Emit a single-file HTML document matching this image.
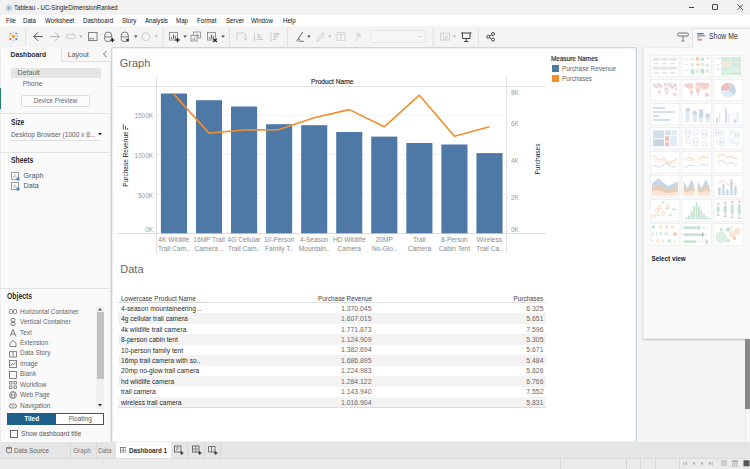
<!DOCTYPE html>
<html><head><meta charset="utf-8"><style>
*{margin:0;padding:0;box-sizing:border-box}
html,body{width:750px;height:469px;overflow:hidden;background:#efefef;font-family:"Liberation Sans", sans-serif;}
.a{position:absolute;white-space:nowrap}
.t{position:absolute;white-space:nowrap;line-height:1}
</style></head><body>

<div class="a" style="left:0;top:0;width:750px;height:14.5px;background:#f2f2f2"></div>
<div class="t" style="left:14.4px;top:4.2px;font-size:7.3px;color:#1a1a1a;transform:scaleX(0.83);transform-origin:0 0">Tableau - UC-SingleDimensionRanked</div>
<svg class="a" style="left:5px;top:4px" width="8" height="8" viewBox="0 0 8 8"><g stroke="#7aa6d6" stroke-width="0.8"><line x1="4" y1="0.5" x2="4" y2="7.5"/><line x1="0.5" y1="4" x2="7.5" y2="4"/><line x1="1.5" y1="1.5" x2="6.5" y2="6.5"/><line x1="6.5" y1="1.5" x2="1.5" y2="6.5"/></g></svg>
<div class="a" style="left:688.6px;top:6.5px;width:5.8px;height:1.1px;background:#444"></div>
<div class="a" style="left:712px;top:4.2px;width:6.2px;height:5.8px;border:1.1px solid #444;border-radius:1px"></div>
<svg class="a" style="left:736.5px;top:4px" width="6.5" height="6.5" viewBox="0 0 6.5 6.5"><path d="M0.3 0.3L6.2 6.2M6.2 0.3L0.3 6.2" stroke="#444" stroke-width="0.9"/></svg>
<div class="a" style="left:0;top:14.5px;width:750px;height:11.5px;background:#ffffff"></div>
<div class="t" style="left:5.5px;top:16.9px;font-size:7px;color:#111;transform:scaleX(0.88);transform-origin:0 0">File</div>
<div class="t" style="left:23.3px;top:16.9px;font-size:7px;color:#111;transform:scaleX(0.88);transform-origin:0 0">Data</div>
<div class="t" style="left:45px;top:16.9px;font-size:7px;color:#111;transform:scaleX(0.88);transform-origin:0 0">Worksheet</div>
<div class="t" style="left:82.7px;top:16.9px;font-size:7px;color:#111;transform:scaleX(0.88);transform-origin:0 0">Dashboard</div>
<div class="t" style="left:121.7px;top:16.9px;font-size:7px;color:#111;transform:scaleX(0.88);transform-origin:0 0">Story</div>
<div class="t" style="left:145px;top:16.9px;font-size:7px;color:#111;transform:scaleX(0.88);transform-origin:0 0">Analysis</div>
<div class="t" style="left:175.7px;top:16.9px;font-size:7px;color:#111;transform:scaleX(0.88);transform-origin:0 0">Map</div>
<div class="t" style="left:196.7px;top:16.9px;font-size:7px;color:#111;transform:scaleX(0.88);transform-origin:0 0">Format</div>
<div class="t" style="left:225.7px;top:16.9px;font-size:7px;color:#111;transform:scaleX(0.88);transform-origin:0 0">Server</div>
<div class="t" style="left:251.1px;top:16.9px;font-size:7px;color:#111;transform:scaleX(0.88);transform-origin:0 0">Window</div>
<div class="t" style="left:282.6px;top:16.9px;font-size:7px;color:#111;transform:scaleX(0.88);transform-origin:0 0">Help</div>
<div class="a" style="left:0;top:26px;width:750px;height:21px;background:#f4f4f4"></div>
<svg class="a" style="left:0;top:26px" width="750" height="21" viewBox="0 26 750 21">
<path d="M11.8 36.4H15.0M13.4 34.8V38.0" stroke="#f28e2b" stroke-width="1.44"/>
<path d="M9.600000000000001 33.8H11.600000000000001M10.600000000000001 32.8V34.8" stroke="#f28e2b" stroke-width="0.90"/>
<path d="M15.299999999999999 33.6H17.099999999999998M16.2 32.7V34.5" stroke="#4e79a7" stroke-width="0.81"/>
<path d="M9.3 39.1H11.5M10.4 38.0V40.2" stroke="#e15759" stroke-width="0.99"/>
<path d="M15.200000000000001 39.1H17.400000000000002M16.3 38.0V40.2" stroke="#4e79a7" stroke-width="0.99"/>
<path d="M12.8 32.4H14.0M13.4 31.799999999999997V33.0" stroke="#76b7d9" stroke-width="0.54"/>
<path d="M12.8 40.4H14.0M13.4 39.8V41.0" stroke="#76b7d9" stroke-width="0.54"/>
<path d="M8.8 36.4H10.0M9.4 35.8V37.0" stroke="#76b7d9" stroke-width="0.54"/>
<path d="M16.799999999999997 36.4H18.0M17.4 35.8V37.0" stroke="#4e79a7" stroke-width="0.54"/>
<line x1="25.6" y1="28" x2="25.6" y2="46" stroke="#dcdcdc" stroke-width="0.8"/>
<path d="M42.5 36.6H33.8M37.8 32.6L33.8 36.6L37.8 40.6" fill="none" stroke="#555" stroke-width="1.0" stroke-linecap="round" stroke-linejoin="round"/>
<path d="M50.5 36.6H59.2M55.2 32.6L59.2 36.6L55.2 40.6" fill="none" stroke="#aaa" stroke-width="0.9" stroke-linecap="round" stroke-linejoin="round"/>
<path d="M68 34.6H73.5A2 2 0 0 1 73.5 38.6H68A2 2 0 0 1 68 34.6Z M73 33V34.6" fill="none" stroke="#c3c3c3" stroke-width="0.8" stroke-linecap="round" stroke-linejoin="round"/>
<path d="M79.2 35.6H82.8L81 37.8Z" fill="#aaa"/>
<rect x="88.5" y="32.5" width="8.5" height="8" fill="none" stroke="#777" stroke-width="0.9"/>
<rect x="90" y="38.3" width="3.5" height="2.2" fill="none" stroke="#777" stroke-width="0.7"/>
<path d="M104.7 35.5A3.5 3.5 0 0 1 111.7 35.5V39.5A3.5 2 0 0 1 104.7 39.5Z M104.7 35.5A3.5 1.6 0 0 0 111.7 35.5" fill="none" stroke="#666" stroke-width="0.85"/><path d="M121.3 35.5A3.5 3.5 0 0 1 128.3 35.5V39.5A3.5 2 0 0 1 121.3 39.5Z M121.3 35.5A3.5 1.6 0 0 0 128.3 35.5" fill="none" stroke="#666" stroke-width="0.85"/>
<path d="M110.3 40.2H114.5M112.4 38.1V42.3" stroke="#222" stroke-width="1.2"/>
<rect x="126.3" y="38.8" width="2.6" height="2.6" fill="#444"/>
<path d="M133.9 35.6H137.5L135.7 37.8Z" fill="#444"/>
<circle cx="145.8" cy="36.6" r="4" fill="none" stroke="#c8c8c8" stroke-width="0.9"/>
<path d="M154.5 35.6H158.1L156.3 37.8Z" fill="#bbb"/>
<line x1="163.3" y1="28" x2="163.3" y2="46" stroke="#dcdcdc" stroke-width="0.8"/>
<rect x="169.5" y="32.4" width="8" height="7.6" fill="none" stroke="#8a8a8a" stroke-width="0.9"/>
<path d="M171.7 38.8V37M173.5 38.8V34.5M175.3 38.8V35.8" stroke="#555" stroke-width="0.9"/>
<path d="M175.3 40H179.7M177.5 37.8V42.2" stroke="#222" stroke-width="1.3"/>
<path d="M183.2 35.6H186.8L185 37.8Z" fill="#444"/>
<rect x="193.5" y="32" width="7" height="6" fill="#f4f4f4" stroke="#888" stroke-width="0.8"/><path d="M195.5 36.5V35M197 36.5V33.8M198.5 36.5V34.8" stroke="#666" stroke-width="0.7"/>
<rect x="191" y="35.5" width="6" height="5.5" fill="#f4f4f4" stroke="#888" stroke-width="0.8"/><path d="M193 39.8V38.5M194.5 39.8V37.5" stroke="#666" stroke-width="0.7"/>
<rect x="207.5" y="32.4" width="8" height="7.6" fill="none" stroke="#8a8a8a" stroke-width="0.9"/>
<path d="M209.7 38.8V37M211.5 38.8V34.5M213.3 38.8V35.8" stroke="#555" stroke-width="0.9"/>
<path d="M213.3 38.6L216.9 42M216.9 38.6L213.3 42" stroke="#222" stroke-width="1.3"/>
<path d="M221.2 35.6H224.8L223 37.8Z" fill="#444"/>
<line x1="229.5" y1="28" x2="229.5" y2="46" stroke="#dcdcdc" stroke-width="0.8"/>
<path d="M237 33H243.5Q245.5 33 245.5 35V39.5M243.5 38L245.5 40.5L247.5 38 M237 33V40" fill="none" stroke="#c8c8c8" stroke-width="0.8" stroke-linecap="round" stroke-linejoin="round"/>
<path d="M254.5 32.5V41M253 39.5L254.5 41L256 39.5" fill="none" stroke="#c8c8c8" stroke-width="0.8" stroke-linecap="round" stroke-linejoin="round"/>
<path d="M257.5 35H260M257.5 37.2H261.5M257.5 39.4H263" stroke="#c8c8c8" stroke-width="1.3"/>
<path d="M271 32.5V41M269.5 39.5L271 41L272.5 39.5" fill="none" stroke="#c8c8c8" stroke-width="0.8" stroke-linecap="round" stroke-linejoin="round"/>
<path d="M273.5 34H279.5M273.5 36.5H278M273.5 39H276" stroke="#c8c8c8" stroke-width="1.3"/>
<line x1="287.5" y1="28" x2="287.5" y2="46" stroke="#dcdcdc" stroke-width="0.8"/>
<path d="M297 40.8L302.5 32.5M299 41.2H303.5" fill="none" stroke="#777" stroke-width="1.1" stroke-linecap="round" stroke-linejoin="round"/>
<path d="M298.5 39L300 40" fill="none" stroke="#777" stroke-width="1.0" stroke-linecap="round" stroke-linejoin="round"/>
<path d="M307.1 35.6H310.7L308.9 37.8Z" fill="#444"/>
<path d="M316.5 40.5L322 33.8Q323.3 32.5 324 33.5Q324.6 34.5 323.5 35.5L318.5 41Q317.5 41.8 316.8 41" fill="none" stroke="#c8c8c8" stroke-width="0.9" stroke-linecap="round" stroke-linejoin="round"/>
<path d="M327.9 35.6H331.5L329.7 37.8Z" fill="#bbb"/>
<rect x="337" y="32.5" width="8" height="8" fill="none" stroke="#d0d0d0" stroke-width="0.8"/>
<path d="M339 34.5H343M341 34.5V39" fill="none" stroke="#c8c8c8" stroke-width="0.8" stroke-linecap="round" stroke-linejoin="round"/>
<path d="M355 41L357.5 38M356.5 34L360 37.5M357.5 33.5L361 36.5M357 36.5L359.5 33.5" fill="none" stroke="#c8c8c8" stroke-width="0.9" stroke-linecap="round" stroke-linejoin="round"/>
<rect x="370.8" y="30.4" width="54.5" height="12" rx="1.5" fill="#f6f6f6" stroke="#e0e0e0" stroke-width="0.8"/>
<path d="M419 36H422L420.5 37.6Z" fill="#ccc"/>
<line x1="433.2" y1="28" x2="433.2" y2="46" stroke="#dcdcdc" stroke-width="0.8"/>
<rect x="440.5" y="33" width="9" height="7" fill="none" stroke="#c8c8c8" stroke-width="0.8"/>
<path d="M443.5 33V40M445.5 39V36.5M447 39V35" stroke="#c8c8c8" stroke-width="0.8"/>
<path d="M452.7 35.6H456.3L454.5 37.8Z" fill="#bbb"/>
<path d="M461.5 33H471M462.5 33V38.5H470V33M466.3 38.5V41.5M464.5 41.5H468" fill="none" stroke="#444" stroke-width="1.0" stroke-linecap="round" stroke-linejoin="round"/>
<line x1="478.4" y1="28" x2="478.4" y2="46" stroke="#dcdcdc" stroke-width="0.8"/>
<g fill="none" stroke="#333" stroke-width="0.9"><circle cx="488.3" cy="36.8" r="1.5"/><circle cx="493" cy="34" r="1.5"/><circle cx="493" cy="39.6" r="1.5"/><path d="M489.6 36L491.7 34.8M489.6 37.6L491.7 38.8"/></g>
</svg>
<div class="a" style="left:691.5px;top:28.3px;width:58.5px;height:20px;background:#fafafa;border:1px solid #e4e4e4;border-bottom:none;border-right:none;z-index:2"></div>
<svg class="a" style="left:677px;top:32px;z-index:2" width="12" height="10" viewBox="0 0 12 10"><path d="M2 1H10A1.5 1.5 0 0 1 10 4H2A1.5 1.5 0 0 1 2 1Z M6 4V8.5M4.5 9H7.5" fill="none" stroke="#666" stroke-width="0.9"/></svg>
<svg class="a" style="left:697px;top:33px;z-index:2" width="9" height="9" viewBox="0 0 9 9"><rect x="0.2" y="0.2" width="6.5" height="1.2" fill="#555"/><rect x="0.2" y="2.2" width="8.3" height="1.2" fill="#6b8fbf"/><rect x="0.2" y="4.2" width="3.2" height="1.2" fill="#f5a05a"/><rect x="0.2" y="6.2" width="5" height="1.3" fill="#e8707a"/></svg>
<div class="t" style="left:708.5px;top:32.3px;font-size:8.3px;color:#333;z-index:2;transform:scaleX(0.83);transform-origin:0 0">Show Me</div>

<div class="a" style="left:0;top:47px;width:111px;height:395px;background:#fafafa;border-right:1px solid #e1e1e1"></div>
<div class="a" style="left:0;top:47px;width:1px;height:395px;background:#ececec"></div><div class="a" style="left:0;top:88px;width:1.3px;height:21px;background:#22806a"></div>
<div class="t" style="left:10.6px;top:51.8px;font-size:6.8px;font-weight:bold;color:#2b2b2b">Dashboard</div>
<div class="a" style="left:61px;top:47px;width:50px;height:14.5px;border-left:1px solid #e1e1e1;border-bottom:1px solid #e1e1e1;background:#f7f7f7"></div>
<div class="t" style="left:67.8px;top:50.8px;font-size:7px;color:#555">Layout</div>
<svg class="a" style="left:102px;top:50px" width="6" height="8" viewBox="0 0 6 8"><path d="M4.5 1L1.5 4L4.5 7" fill="none" stroke="#666" stroke-width="0.9"/></svg>
<div class="a" style="left:10.6px;top:68px;width:90.5px;height:10px;background:#e4e4e4"></div>
<div class="t" style="left:17.6px;top:69.3px;font-size:7px;color:#666">Default</div>
<div class="t" style="left:22.7px;top:80.6px;font-size:6.8px;color:#666">Phone</div>
<div class="a" style="left:21px;top:95px;width:69px;height:11.5px;border:1px solid #dadada;border-radius:1.5px;background:#fcfcfc"></div>
<div class="t" style="left:21px;top:97.6px;width:69px;text-align:center;font-size:6.3px;color:#666">Device Preview</div>
<div class="a" style="left:0;top:113px;width:111px;height:1px;background:#e3e3e3"></div>
<div class="t" style="left:10.9px;top:118.2px;font-size:8.3px;font-weight:bold;color:#2b2b2b;transform:scaleX(0.8);transform-origin:0 0">Size</div>
<div class="t" style="left:10.9px;top:132.4px;font-size:6.55px;color:#666">Desktop Browser (1000 x 8...</div>
<svg class="a" style="left:98px;top:133px" width="4" height="3" viewBox="0 0 4 3"><path d="M0 0H4L2 2.5Z" fill="#333"/></svg>
<div class="a" style="left:10.9px;top:140px;width:90px;height:1px;background:#dedede"></div>
<div class="a" style="left:0;top:152px;width:111px;height:1px;background:#e3e3e3"></div>
<div class="t" style="left:10.9px;top:156.4px;font-size:8.3px;font-weight:bold;color:#2b2b2b;transform:scaleX(0.824);transform-origin:0 0">Sheets</div>
<svg class="a" style="left:11px;top:172px" width="9" height="9" viewBox="0 0 9 9"><rect x="0.4" y="0.4" width="7" height="7" fill="#fff" stroke="#8a8a8a" stroke-width="0.8"/><path d="M2.5 5.5V3.8M3.8 5.5V2.3M5 5.5V3.3" stroke="#999" stroke-width="0.6"/><circle cx="7" cy="7" r="1.7" fill="#3c7fb8"/><path d="M6.2 7L6.8 7.6L7.8 6.4" fill="none" stroke="#cfe0f0" stroke-width="0.4"/></svg>
<div class="t" style="left:23.5px;top:172px;font-size:7.2px;color:#555">Graph</div>
<svg class="a" style="left:11px;top:182px" width="9" height="9" viewBox="0 0 9 9"><rect x="0.4" y="0.4" width="7" height="7" fill="#fff" stroke="#8a8a8a" stroke-width="0.8"/><path d="M2.5 5.5V3.8M3.8 5.5V2.3M5 5.5V3.3" stroke="#999" stroke-width="0.6"/><circle cx="7" cy="7" r="1.7" fill="#3c7fb8"/><path d="M6.2 7L6.8 7.6L7.8 6.4" fill="none" stroke="#cfe0f0" stroke-width="0.4"/></svg>
<div class="t" style="left:23.5px;top:182.2px;font-size:7.2px;color:#555">Data</div>
<div class="a" style="left:0;top:288px;width:111px;height:1px;background:#e3e3e3"></div>
<div class="t" style="left:7.4px;top:292.1px;font-size:8.3px;font-weight:bold;color:#2b2b2b;transform:scaleX(0.824);transform-origin:0 0">Objects</div>
<svg class="a" style="left:8.8px;top:307.9px" width="8" height="8" viewBox="0 0 8 8"><rect x="0.5" y="1.5" width="3" height="4" rx="1" fill="none" stroke="#666" stroke-width="0.8"/><rect x="4.5" y="1.5" width="3" height="4" rx="1" fill="none" stroke="#666" stroke-width="0.8"/></svg>
<div class="t" style="left:20px;top:308.6px;font-size:6.45px;color:#666">Horizontal Container</div>
<svg class="a" style="left:8.8px;top:318.3px" width="8" height="8" viewBox="0 0 8 8"><rect x="2" y="0.5" width="4" height="3" rx="1" fill="none" stroke="#666" stroke-width="0.8"/><rect x="2" y="4.5" width="4" height="3" rx="1" fill="none" stroke="#666" stroke-width="0.8"/></svg>
<div class="t" style="left:20px;top:319.0px;font-size:6.45px;color:#666">Vertical Container</div>
<svg class="a" style="left:8.8px;top:328.8px" width="8" height="8" viewBox="0 0 8 8"><path d="M1 7.5L4 0.5L7 7.5M2.2 5H5.8" fill="none" stroke="#555" stroke-width="0.8"/></svg>
<div class="t" style="left:20px;top:329.5px;font-size:6.45px;color:#666">Text</div>
<svg class="a" style="left:8.8px;top:339.2px" width="8" height="8" viewBox="0 0 8 8"><path d="M1 7.5V4L4 1.5L7 4V7.5Z" fill="none" stroke="#666" stroke-width="0.8"/></svg>
<div class="t" style="left:20px;top:339.9px;font-size:6.45px;color:#666">Extension</div>
<svg class="a" style="left:8.8px;top:349.6px" width="8" height="8" viewBox="0 0 8 8"><path d="M0.5 1.5H3.5L4 2.5L4.5 1.5H7.5V7H4.5L4 7.5L3.5 7H0.5Z M4 2.5V7" fill="none" stroke="#666" stroke-width="0.8"/></svg>
<div class="t" style="left:20px;top:350.3px;font-size:6.45px;color:#666">Data Story</div>
<svg class="a" style="left:8.8px;top:360.0px" width="8" height="8" viewBox="0 0 8 8"><rect x="0.5" y="0.5" width="7" height="7" fill="none" stroke="#666" stroke-width="0.8"/><path d="M1.5 6L3.5 3.5L5 5L6.5 2" fill="none" stroke="#666" stroke-width="0.7"/></svg>
<div class="t" style="left:20px;top:360.7px;font-size:6.45px;color:#666">Image</div>
<svg class="a" style="left:8.8px;top:370.5px" width="8" height="8" viewBox="0 0 8 8"><rect x="0.5" y="0.5" width="7" height="7" fill="none" stroke="#666" stroke-width="0.8"/></svg>
<div class="t" style="left:20px;top:371.2px;font-size:6.45px;color:#666">Blank</div>
<svg class="a" style="left:8.8px;top:380.9px" width="8" height="8" viewBox="0 0 8 8"><rect x="0.5" y="0.5" width="2.5" height="2.5" fill="none" stroke="#666" stroke-width="0.7"/><rect x="5" y="0.5" width="2.5" height="2.5" fill="none" stroke="#666" stroke-width="0.7"/><rect x="0.5" y="5" width="2.5" height="2.5" fill="none" stroke="#666" stroke-width="0.7"/><rect x="5" y="5" width="2.5" height="2.5" fill="none" stroke="#666" stroke-width="0.7"/></svg>
<div class="t" style="left:20px;top:381.6px;font-size:6.45px;color:#666">Workflow</div>
<svg class="a" style="left:8.8px;top:391.3px" width="8" height="8" viewBox="0 0 8 8"><circle cx="4" cy="4" r="3.4" fill="none" stroke="#666" stroke-width="0.8"/><ellipse cx="4" cy="4" rx="1.5" ry="3.4" fill="none" stroke="#666" stroke-width="0.6"/><path d="M0.6 4H7.4" stroke="#666" stroke-width="0.6"/></svg>
<div class="t" style="left:20px;top:392.0px;font-size:6.45px;color:#666">Web Page</div>
<svg class="a" style="left:8.8px;top:401.8px" width="8" height="8" viewBox="0 0 8 8"><rect x="0.5" y="2" width="7" height="4" rx="2" fill="none" stroke="#666" stroke-width="0.8"/><path d="M2.5 4H5.5" stroke="#666" stroke-width="0.7"/></svg>
<div class="t" style="left:20px;top:402.5px;font-size:6.45px;color:#666">Navigation</div>
<div class="a" style="left:96px;top:306px;width:8px;height:103px;background:#f0f0f0"></div>
<div class="a" style="left:96.5px;top:311.8px;width:7px;height:67px;background:#c1c1c1"></div>
<svg class="a" style="left:98px;top:307.5px" width="4" height="3" viewBox="0 0 4 3"><path d="M0 2.5H4L2 0Z" fill="#555"/></svg>
<svg class="a" style="left:98px;top:403.5px" width="4" height="3" viewBox="0 0 4 3"><path d="M0 0H4L2 2.5Z" fill="#333"/></svg>
<div class="a" style="left:7.4px;top:412.7px;width:97px;height:12.3px;border:1px solid #555;background:#fff"></div>
<div class="a" style="left:7.4px;top:412.7px;width:48.6px;height:12.3px;background:#1d5f8a"></div>
<div class="t" style="left:7.4px;top:415.6px;width:48.6px;text-align:center;font-size:6.5px;font-weight:bold;color:#fff">Tiled</div>
<div class="t" style="left:56px;top:415.6px;width:48.4px;text-align:center;font-size:6.5px;color:#555">Floating</div>
<div class="a" style="left:10px;top:429.6px;width:8px;height:8px;border:1px solid #666;background:#fff"></div>
<div class="t" style="left:21.1px;top:430.7px;font-size:6.45px;color:#555">Show dashboard title</div>

<div class="a" style="left:111px;top:47px;width:526px;height:396px;background:#fff;border:1px solid #cdd6e0;border-radius:2px;box-shadow:inset 0 0 0 1px #edf1f5"></div>
<svg class="a" style="left:0;top:0" width="750" height="469" viewBox="0 0 750 469"><line x1="153" y1="193.9" x2="506" y2="193.9" stroke="#f2f2f2" stroke-width="1"/>
<line x1="153" y1="154.4" x2="506" y2="154.4" stroke="#f2f2f2" stroke-width="1"/>
<line x1="153" y1="115.0" x2="506" y2="115.0" stroke="#f2f2f2" stroke-width="1"/>
<line x1="506" y1="196.7" x2="509" y2="196.7" stroke="#eeeeee" stroke-width="1"/>
<line x1="506" y1="160.2" x2="509" y2="160.2" stroke="#eeeeee" stroke-width="1"/>
<line x1="506" y1="123.6" x2="509" y2="123.6" stroke="#eeeeee" stroke-width="1"/>
<line x1="156.5" y1="76" x2="156.5" y2="254" stroke="#e3e3e3" stroke-width="1"/>
<line x1="506.5" y1="76" x2="506.5" y2="254" stroke="#e3e3e3" stroke-width="1"/>
<line x1="117.5" y1="86.5" x2="546" y2="86.5" stroke="#e3e3e3" stroke-width="1"/>
<line x1="117.5" y1="233.5" x2="546" y2="233.5" stroke="#dcdcdc" stroke-width="1"/>
<rect x="160.90" y="93.5" width="26.1" height="139.8" fill="#4e79a7"/>
<rect x="195.96" y="100.2" width="26.1" height="133.1" fill="#4e79a7"/>
<rect x="231.02" y="106.5" width="26.1" height="126.8" fill="#4e79a7"/>
<rect x="266.08" y="124.2" width="26.1" height="109.1" fill="#4e79a7"/>
<rect x="301.14" y="125.2" width="26.1" height="108.1" fill="#4e79a7"/>
<rect x="336.20" y="132.0" width="26.1" height="101.3" fill="#4e79a7"/>
<rect x="371.26" y="136.6" width="26.1" height="96.7" fill="#4e79a7"/>
<rect x="406.32" y="143.0" width="26.1" height="90.3" fill="#4e79a7"/>
<rect x="441.38" y="144.5" width="26.1" height="88.8" fill="#4e79a7"/>
<rect x="476.44" y="153.1" width="26.1" height="80.2" fill="#4e79a7"/>
<polyline points="173.95,94.4 209.01,133.1 244.07,130.0 279.13,129.6 314.19,117.7 349.25,109.6 384.31,126.8 419.37,95.2 454.43,136.3 489.49,126.7" fill="none" stroke="#f28e2b" stroke-width="1.6" stroke-linejoin="round"/></svg>
<div class="t" style="left:119.7px;top:58.2px;font-size:11px;color:#666;">Graph</div>
<div class="t" style="left:120.3px;top:263.8px;font-size:11px;color:#666;">Data</div>
<div class="t" style="left:310.8px;top:77.7px;font-size:7px;color:#333;-webkit-text-stroke:0.2px #333;transform:scaleX(0.95);transform-origin:0 0">Product Name</div>
<div class="t" style="left:113px;top:113.1px;width:40px;text-align:right;font-size:6.4px;color:#9a9a9a">1500K</div>
<div class="t" style="left:113px;top:153.0px;width:40px;text-align:right;font-size:6.4px;color:#9a9a9a">1000K</div>
<div class="t" style="left:113px;top:192.6px;width:40px;text-align:right;font-size:6.4px;color:#9a9a9a">500K</div>
<div class="t" style="left:113px;top:226.6px;width:40px;text-align:right;font-size:6.4px;color:#9a9a9a">0K</div>
<div class="t" style="left:511px;top:89.6px;font-size:6.4px;color:#9a9a9a;">8K</div>
<div class="t" style="left:511px;top:121.2px;font-size:6.4px;color:#9a9a9a;">6K</div>
<div class="t" style="left:511px;top:157.9px;font-size:6.4px;color:#9a9a9a;">4K</div>
<div class="t" style="left:511px;top:194.6px;font-size:6.4px;color:#9a9a9a;">2K</div>
<div class="t" style="left:511px;top:226.6px;font-size:6.4px;color:#9a9a9a;">0K</div>
<div class="t" style="left:125.8px;top:158.8px;font-size:6.5px;color:#222;transform:translate(-50%,-50%) rotate(-90deg);transform-origin:center">Purchase Revenue</div>
<svg class="a" style="left:0;top:0" width="140" height="140" viewBox="0 0 140 140"><path d="M123.3 124.2V129.7M125.5 126.3V129.7M127.6 128V129.7" stroke="#555" stroke-width="1"/></svg>
<div class="t" style="left:538px;top:158.8px;font-size:6.6px;color:#222;transform:translate(-50%,-50%) rotate(-90deg);transform-origin:center">Purchases</div>
<div class="t" style="left:156.45000000000002px;top:237.1px;width:35px;text-align:center;font-size:6.6px;color:#8a8a8a">4K Wildlife</div>
<div class="t" style="left:156.45000000000002px;top:246.1px;width:35px;text-align:center;font-size:6.6px;color:#8a8a8a">Trail Cam..</div>
<div class="t" style="left:191.51000000000002px;top:237.1px;width:35px;text-align:center;font-size:6.6px;color:#8a8a8a">16MP Trail</div>
<div class="t" style="left:191.51000000000002px;top:246.1px;width:35px;text-align:center;font-size:6.6px;color:#8a8a8a">Camera ..</div>
<div class="t" style="left:226.57000000000002px;top:237.1px;width:35px;text-align:center;font-size:6.6px;color:#8a8a8a">4G Cellular</div>
<div class="t" style="left:226.57000000000002px;top:246.1px;width:35px;text-align:center;font-size:6.6px;color:#8a8a8a">Trail Cam..</div>
<div class="t" style="left:261.63px;top:237.1px;width:35px;text-align:center;font-size:6.6px;color:#8a8a8a">10-Person</div>
<div class="t" style="left:261.63px;top:246.1px;width:35px;text-align:center;font-size:6.6px;color:#8a8a8a">Family T..</div>
<div class="t" style="left:296.69000000000005px;top:237.1px;width:35px;text-align:center;font-size:6.6px;color:#8a8a8a">4-Season</div>
<div class="t" style="left:296.69000000000005px;top:246.1px;width:35px;text-align:center;font-size:6.6px;color:#8a8a8a">Mountain..</div>
<div class="t" style="left:331.75px;top:237.1px;width:35px;text-align:center;font-size:6.6px;color:#8a8a8a">HD Wildlife</div>
<div class="t" style="left:331.75px;top:246.1px;width:35px;text-align:center;font-size:6.6px;color:#8a8a8a">Camera</div>
<div class="t" style="left:366.81000000000006px;top:237.1px;width:35px;text-align:center;font-size:6.6px;color:#8a8a8a">20MP</div>
<div class="t" style="left:366.81000000000006px;top:246.1px;width:35px;text-align:center;font-size:6.6px;color:#8a8a8a">No-Glo..</div>
<div class="t" style="left:401.87px;top:237.1px;width:35px;text-align:center;font-size:6.6px;color:#8a8a8a">Trail</div>
<div class="t" style="left:401.87px;top:246.1px;width:35px;text-align:center;font-size:6.6px;color:#8a8a8a">Camera</div>
<div class="t" style="left:436.93000000000006px;top:237.1px;width:35px;text-align:center;font-size:6.6px;color:#8a8a8a">8-Person</div>
<div class="t" style="left:436.93000000000006px;top:246.1px;width:35px;text-align:center;font-size:6.6px;color:#8a8a8a">Cabin Tent</div>
<div class="t" style="left:471.99px;top:237.1px;width:35px;text-align:center;font-size:6.6px;color:#8a8a8a">Wireless</div>
<div class="t" style="left:471.99px;top:246.1px;width:35px;text-align:center;font-size:6.6px;color:#8a8a8a">Trail Ca..</div>
<div class="t" style="left:550.8px;top:54.7px;font-size:7px;color:#333;-webkit-text-stroke:0.2px #333;transform:scaleX(0.913);transform-origin:0 0">Measure Names</div>
<div class="a" style="left:552px;top:64.7px;width:7.3px;height:7px;background:#4e79a7"></div>
<div class="a" style="left:552px;top:75.3px;width:7.3px;height:7px;background:#f28e2b"></div>
<div class="t" style="left:562px;top:65.7px;font-size:6.8px;color:#666;transform:scaleX(0.935);transform-origin:0 0">Purchase Revenue</div>
<div class="t" style="left:562px;top:76.0px;font-size:6.8px;color:#666;transform:scaleX(0.935);transform-origin:0 0">Purchases</div>
<div class="a" style="left:118px;top:302px;width:428px;height:1px;background:#e0e0e0"></div>
<div class="a" style="left:118px;top:302px;width:84px;height:1px;background:#d4d4d4"></div>
<div class="t" style="left:120.8px;top:295.9px;font-size:6.8px;color:#3a3a3a;transform:scaleX(0.958);transform-origin:0 0">Lowercase Product Name</div>
<div class="t" style="left:300px;top:296px;width:72px;text-align:right;font-size:6.35px;color:#444">Purchase Revenue</div>
<div class="t" style="left:480px;top:296px;width:63.5px;text-align:right;font-size:6.35px;color:#444">Purchases</div>
<div class="t" style="left:120.8px;top:305.7px;font-size:7.15px;color:#2a2a2a;transform:scaleX(0.93);transform-origin:0 0">4-season mountaineering ..</div>
<div class="t" style="left:300px;top:305.63px;width:71.5px;text-align:right;font-size:6.87px;color:#6a6a6a">1.370.045</div>
<div class="t" style="left:480px;top:305.63px;width:63.5px;text-align:right;font-size:6.87px;color:#6a6a6a">6.325</div>
<div class="a" style="left:118px;top:313.4px;width:428px;height:10.45px;background:#f3f3f3"></div>
<div class="t" style="left:120.8px;top:316.1px;font-size:7.15px;color:#2a2a2a;transform:scaleX(0.93);transform-origin:0 0">4g cellular trail camera</div>
<div class="t" style="left:300px;top:316.08px;width:71.5px;text-align:right;font-size:6.87px;color:#6a6a6a">1.607.015</div>
<div class="t" style="left:480px;top:316.08px;width:63.5px;text-align:right;font-size:6.87px;color:#6a6a6a">5.651</div>
<div class="t" style="left:120.8px;top:326.6px;font-size:7.15px;color:#2a2a2a;transform:scaleX(0.93);transform-origin:0 0">4k wildlife trail camera</div>
<div class="t" style="left:300px;top:326.53px;width:71.5px;text-align:right;font-size:6.87px;color:#6a6a6a">1.771.873</div>
<div class="t" style="left:480px;top:326.53px;width:63.5px;text-align:right;font-size:6.87px;color:#6a6a6a">7.596</div>
<div class="a" style="left:118px;top:334.4px;width:428px;height:10.45px;background:#f3f3f3"></div>
<div class="t" style="left:120.8px;top:337.0px;font-size:7.15px;color:#2a2a2a;transform:scaleX(0.93);transform-origin:0 0">8-person cabin tent</div>
<div class="t" style="left:300px;top:336.98px;width:71.5px;text-align:right;font-size:6.87px;color:#6a6a6a">1.124.909</div>
<div class="t" style="left:480px;top:336.98px;width:63.5px;text-align:right;font-size:6.87px;color:#6a6a6a">5.305</div>
<div class="t" style="left:120.8px;top:347.5px;font-size:7.15px;color:#2a2a2a;transform:scaleX(0.93);transform-origin:0 0">10-person family tent</div>
<div class="t" style="left:300px;top:347.43px;width:71.5px;text-align:right;font-size:6.87px;color:#6a6a6a">1.382.694</div>
<div class="t" style="left:480px;top:347.43px;width:63.5px;text-align:right;font-size:6.87px;color:#6a6a6a">5.671</div>
<div class="a" style="left:118px;top:355.2px;width:428px;height:10.45px;background:#f3f3f3"></div>
<div class="t" style="left:120.8px;top:357.9px;font-size:7.15px;color:#2a2a2a;transform:scaleX(0.93);transform-origin:0 0">16mp trail camera with so..</div>
<div class="t" style="left:300px;top:357.88px;width:71.5px;text-align:right;font-size:6.87px;color:#6a6a6a">1.686.895</div>
<div class="t" style="left:480px;top:357.88px;width:63.5px;text-align:right;font-size:6.87px;color:#6a6a6a">5.484</div>
<div class="t" style="left:120.8px;top:368.4px;font-size:7.15px;color:#2a2a2a;transform:scaleX(0.93);transform-origin:0 0">20mp no-glow trail camera</div>
<div class="t" style="left:300px;top:368.33px;width:71.5px;text-align:right;font-size:6.87px;color:#6a6a6a">1.224.983</div>
<div class="t" style="left:480px;top:368.33px;width:63.5px;text-align:right;font-size:6.87px;color:#6a6a6a">5.826</div>
<div class="a" style="left:118px;top:376.1px;width:428px;height:10.45px;background:#f3f3f3"></div>
<div class="t" style="left:120.8px;top:378.8px;font-size:7.15px;color:#2a2a2a;transform:scaleX(0.93);transform-origin:0 0">hd wildlife camera</div>
<div class="t" style="left:300px;top:378.78px;width:71.5px;text-align:right;font-size:6.87px;color:#6a6a6a">1.284.122</div>
<div class="t" style="left:480px;top:378.78px;width:63.5px;text-align:right;font-size:6.87px;color:#6a6a6a">6.766</div>
<div class="t" style="left:120.8px;top:389.3px;font-size:7.15px;color:#2a2a2a;transform:scaleX(0.93);transform-origin:0 0">trail camera</div>
<div class="t" style="left:300px;top:389.23px;width:71.5px;text-align:right;font-size:6.87px;color:#6a6a6a">1.143.940</div>
<div class="t" style="left:480px;top:389.23px;width:63.5px;text-align:right;font-size:6.87px;color:#6a6a6a">7.552</div>
<div class="a" style="left:118px;top:397.1px;width:428px;height:10.45px;background:#f3f3f3"></div>
<div class="t" style="left:120.8px;top:399.7px;font-size:7.15px;color:#2a2a2a;transform:scaleX(0.93);transform-origin:0 0">wireless trail camera</div>
<div class="t" style="left:300px;top:399.68px;width:71.5px;text-align:right;font-size:6.87px;color:#6a6a6a">1.016.904</div>
<div class="t" style="left:480px;top:399.68px;width:63.5px;text-align:right;font-size:6.87px;color:#6a6a6a">5.831</div>
<div class="a" style="left:118px;top:407px;width:428px;height:1px;background:#dcdcdc"></div>

<div class="a" style="left:637px;top:47px;width:113px;height:422px;background:#f4f4f4"></div><div class="a" style="left:744.5px;top:339px;width:5.5px;height:103px;background:#f7f7f7;border-left:1px solid #e6e6e6"></div>
<div class="a" style="left:643px;top:47px;width:107px;height:292px;background:#fafafa;border:1px solid #ebebeb;border-right:none;box-shadow:0 1px 1.5px rgba(0,0,0,0.22)"></div>
<div class="a" style="left:745px;top:339px;width:5px;height:70.4px;background:#888"></div>
<div class="t" style="left:651.6px;top:255.8px;font-size:6.3px;font-weight:bold;color:#222">Select view</div>
<svg class="a" style="left:0;top:0" width="750" height="469" viewBox="0 0 750 469">
<g transform="translate(650.10,55.10)"><rect x="0.25" y="0.25" width="29.5" height="21.5" fill="#fff" stroke="#e4e4e4" stroke-width="0.5"/><rect x="2" y="2" width="26" height="4" fill="#f0f0f0"/><rect x="2" y="11" width="26" height="4" fill="#f0f0f0"/><rect x="4" y="3.5" width="5" height="1.3" fill="#dedede"/><rect x="4" y="8" width="5" height="1.3" fill="#dedede"/><rect x="4" y="12.5" width="5" height="1.3" fill="#dedede"/><rect x="4" y="17" width="5" height="1.3" fill="#dedede"/><rect x="12" y="3.5" width="5" height="1.3" fill="#dedede"/><rect x="12" y="8" width="5" height="1.3" fill="#dedede"/><rect x="12" y="12.5" width="5" height="1.3" fill="#dedede"/><rect x="12" y="17" width="5" height="1.3" fill="#dedede"/><rect x="20" y="3.5" width="5" height="1.3" fill="#dedede"/><rect x="20" y="8" width="5" height="1.3" fill="#dedede"/><rect x="20" y="12.5" width="5" height="1.3" fill="#dedede"/><rect x="20" y="17" width="5" height="1.3" fill="#dedede"/></g>
<g transform="translate(681.65,55.10)"><rect x="0.25" y="0.25" width="29.5" height="21.5" fill="#fff" stroke="#e4e4e4" stroke-width="0.5"/><rect x="9" y="2.5" width="3.5" height="3" fill="#ddefe3"/><rect x="14" y="2" width="3.5" height="3.5" fill="#f9c9a3"/><rect x="19" y="2.5" width="3.5" height="3" fill="#c3e2cf"/><rect x="24" y="2" width="3.5" height="2" fill="#ddefe3"/><rect x="9" y="8" width="3.5" height="3" fill="#ddefe3"/><rect x="14.5" y="8.5" width="3.5" height="1.8" fill="#f9c9a3"/><rect x="19" y="8" width="3.5" height="3" fill="#ddefe3"/><rect x="24" y="8.5" width="3.5" height="3" fill="#ddefe3"/><rect x="9" y="14" width="3.5" height="5" fill="#c3e2cf"/><rect x="14" y="14" width="3.5" height="4" fill="#ddefe3"/><rect x="19" y="13.5" width="3.5" height="5" fill="#c3e2cf"/><rect x="24" y="14" width="3.5" height="4" fill="#ddefe3"/><rect x="3" y="3.5" width="3" height="1" fill="#dedede"/><rect x="3" y="9" width="3" height="1" fill="#dedede"/><rect x="3" y="15" width="3" height="1" fill="#dedede"/></g>
<g transform="translate(713.20,55.10)"><rect x="0.25" y="0.25" width="29.5" height="21.5" fill="#fff" stroke="#e4e4e4" stroke-width="0.5"/><rect x="8" y="2" width="20" height="18" fill="#c3e2cf" opacity="0.75"/><path d="M8 7H28M8 12H28M8 16H28M17 2V20" stroke="#fff" stroke-width="0.5"/><rect x="8.5" y="7" width="8" height="4" fill="#fce6d3"/><rect x="17" y="12" width="10" height="3" fill="#ddefe3"/><rect x="9" y="15" width="7" height="3" fill="#ddefe3"/><rect x="3" y="3" width="3" height="1" fill="#dedede"/><rect x="3" y="9" width="3" height="1" fill="#dedede"/><rect x="3" y="14" width="3" height="1" fill="#dedede"/></g>
<g transform="translate(650.10,79.15)"><rect x="0.25" y="0.25" width="29.5" height="21.5" fill="#fff" stroke="#e4e4e4" stroke-width="0.5"/><path d="M2 5L9 3.5L12.5 5.5L11 8.5L8 10L5.5 8.5L3 7Z M8.5 10.5L11.5 11.5L10 17.5L8.5 14Z M14 3.5L17.5 3.5L17.5 7L14 7Z M13.5 7.5L18 7.5L19 10.5L16.5 17L14.5 12Z M17.5 3L27.5 4L27 9L23 10.5L19.5 9L17.5 7Z M23 14L27 13.5L27.5 17L23.5 17.5Z" fill="#ececec"/><circle cx="4" cy="6" r="0.9" fill="#f5b8b5"/><circle cx="6" cy="8" r="0.9" fill="#f5b8b5"/><circle cx="9" cy="5" r="0.9" fill="#f5b8b5"/><circle cx="11" cy="7" r="0.9" fill="#f5b8b5"/><circle cx="15" cy="5" r="0.9" fill="#f5b8b5"/><circle cx="16" cy="10" r="0.9" fill="#f5b8b5"/><circle cx="17" cy="14" r="0.9" fill="#f5b8b5"/><circle cx="20" cy="6" r="0.9" fill="#f5b8b5"/><circle cx="22" cy="8" r="0.9" fill="#f5b8b5"/><circle cx="25" cy="6" r="0.9" fill="#f5b8b5"/><circle cx="24" cy="15" r="0.9" fill="#f5b8b5"/><circle cx="9" cy="13" r="0.9" fill="#f5b8b5"/><circle cx="26" cy="10" r="0.9" fill="#f5b8b5"/></g>
<g transform="translate(681.65,79.15)"><rect x="0.25" y="0.25" width="29.5" height="21.5" fill="#fff" stroke="#e4e4e4" stroke-width="0.5"/><path d="M2 5L9 3.5L12.5 5.5L11 8.5L8 10L5.5 8.5L3 7Z M8.5 10.5L11.5 11.5L10 17.5L8.5 14Z M14 3.5L17.5 3.5L17.5 7L14 7Z M13.5 7.5L18 7.5L19 10.5L16.5 17L14.5 12Z M17.5 3L27.5 4L27 9L23 10.5L19.5 9L17.5 7Z M23 14L27 13.5L27.5 17L23.5 17.5Z" fill="#f4c4c0" opacity="0.8"/></g>
<g transform="translate(713.20,79.15)"><rect x="0.25" y="0.25" width="29.5" height="21.5" fill="#fff" stroke="#e4e4e4" stroke-width="0.5"/><circle cx="15" cy="11" r="7.5" fill="#e1ebf5"/><path d="M15 11L15 3.5A7.5 7.5 0 0 1 20.5 6Z" fill="#f2bdbd" opacity="0.7"/><path d="M15 11L20.5 6A7.5 7.5 0 0 1 21 16Z" fill="#c9d6e4"/><path d="M15 11L7.5 11A7.5 7.5 0 0 1 15 3.5Z" fill="#f2bdbd"/></g>
<g transform="translate(650.10,103.20)"><rect x="0.25" y="0.25" width="29.5" height="21.5" fill="#fff" stroke="#e4e4e4" stroke-width="0.5"/><rect x="3" y="4" width="12" height="1.6" fill="#c9d6e4"/><rect x="3" y="8" width="22" height="1.6" fill="#c9d6e4"/><rect x="3" y="12" width="6" height="1.6" fill="#c9d6e4"/><rect x="3" y="16" width="17" height="1.6" fill="#c9d6e4"/></g>
<g transform="translate(681.65,103.20)"><rect x="0.25" y="0.25" width="29.5" height="21.5" fill="#fff" stroke="#e4e4e4" stroke-width="0.5"/><rect x="4" y="5" width="4" height="14" fill="#e1ebf5"/><rect x="4" y="5" width="4" height="3" fill="#c9d6e4"/><rect x="11" y="8" width="4" height="11" fill="#e1ebf5"/><rect x="11" y="8" width="4" height="4" fill="#c9d6e4"/><rect x="17.5" y="6" width="4" height="13" fill="#e1ebf5"/><rect x="17.5" y="6" width="4" height="8" fill="#c9d6e4"/><rect x="24" y="10.5" width="4" height="8.5" fill="#e1ebf5"/><rect x="24" y="10.5" width="4" height="4" fill="#c9d6e4"/></g>
<g transform="translate(713.20,103.20)"><rect x="0.25" y="0.25" width="29.5" height="21.5" fill="#fff" stroke="#e4e4e4" stroke-width="0.5"/><rect x="3" y="14" width="1.6" height="6" fill="#c9d6e4"/><rect x="5.5" y="9" width="1.6" height="11" fill="#e1ebf5"/><rect x="12" y="5" width="1.6" height="15" fill="#c9d6e4"/><rect x="14.5" y="11" width="1.6" height="9" fill="#e1ebf5"/><rect x="21" y="16" width="1.6" height="4" fill="#c9d6e4"/><rect x="23.5" y="9" width="1.6" height="11" fill="#e1ebf5"/><path d="M10 1V21M20 1V21" stroke="#eee" stroke-width="0.4"/></g>
<g transform="translate(650.10,127.25)"><rect x="0.25" y="0.25" width="29.5" height="21.5" fill="#fff" stroke="#e4e4e4" stroke-width="0.5"/><rect x="3" y="3" width="11" height="8" fill="#c9d6e4" opacity="0.8"/><rect x="3" y="12" width="11" height="7" fill="#c9d6e4"/><rect x="15" y="3" width="6" height="5" fill="#c9d6e4" opacity="0.7"/><rect x="22" y="3" width="5" height="5" fill="#e1ebf5"/><rect x="15" y="9" width="4" height="5" fill="#f2bdbd"/><rect x="15" y="15" width="4" height="4" fill="#f2bdbd"/><rect x="20" y="9" width="7" height="10" fill="#e1ebf5"/></g>
<g transform="translate(681.65,127.25)"><rect x="0.25" y="0.25" width="29.5" height="21.5" fill="#fff" stroke="#e4e4e4" stroke-width="0.5"/><circle cx="6" cy="4" r="2.6" fill="none" stroke="#c9d6e4" stroke-width="0.6"/><circle cx="6" cy="7" r="2.6" fill="none" stroke="#c9d6e4" stroke-width="0.6"/><circle cx="14" cy="5" r="2.6" fill="none" stroke="#c9d6e4" stroke-width="0.6"/><circle cx="23" cy="5" r="2.6" fill="none" stroke="#c9d6e4" stroke-width="0.6"/><circle cx="23" cy="8" r="2.6" fill="none" stroke="#c9d6e4" stroke-width="0.6"/><circle cx="6" cy="14" r="2.6" fill="none" stroke="#c9d6e4" stroke-width="0.6"/><circle cx="14" cy="13" r="2.6" fill="none" stroke="#c9d6e4" stroke-width="0.6"/><circle cx="14" cy="16" r="2.6" fill="none" stroke="#c9d6e4" stroke-width="0.6"/><circle cx="23" cy="17" r="2.6" fill="none" stroke="#c9d6e4" stroke-width="0.6"/></g>
<g transform="translate(713.20,127.25)"><rect x="0.25" y="0.25" width="29.5" height="21.5" fill="#fff" stroke="#e4e4e4" stroke-width="0.5"/><circle cx="4" cy="4" r="2" fill="none" stroke="#c9d6e4" stroke-width="0.6"/><circle cx="4" cy="7" r="2" fill="none" stroke="#c9d6e4" stroke-width="0.6"/><circle cx="9" cy="6" r="2" fill="none" stroke="#c9d6e4" stroke-width="0.6"/><circle cx="9" cy="13" r="2" fill="none" stroke="#c9d6e4" stroke-width="0.6"/><circle cx="5" cy="15" r="2" fill="none" stroke="#c9d6e4" stroke-width="0.6"/><circle cx="9" cy="17" r="2" fill="none" stroke="#c9d6e4" stroke-width="0.6"/><circle cx="19" cy="5" r="2" fill="none" stroke="#c9d6e4" stroke-width="0.6"/><circle cx="24" cy="7" r="2" fill="none" stroke="#c9d6e4" stroke-width="0.6"/><circle cx="24" cy="9" r="2" fill="none" stroke="#c9d6e4" stroke-width="0.6"/><circle cx="19" cy="14" r="2" fill="none" stroke="#c9d6e4" stroke-width="0.6"/><circle cx="24" cy="16" r="2" fill="none" stroke="#c9d6e4" stroke-width="0.6"/><path d="M15 1V21" stroke="#eee" stroke-width="0.4"/></g>
<g transform="translate(650.10,151.30)"><rect x="0.25" y="0.25" width="29.5" height="21.5" fill="#fff" stroke="#e4e4e4" stroke-width="0.5"/><path d="M3 4L9 9L14 7L18 12L27 8" fill="none" stroke="#f9c9a3" stroke-width="0.9"/><path d="M3 8L9 11L14 9L18 13L27 11" fill="none" stroke="#fce6d3" stroke-width="0.9"/><path d="M3 14L9 16L16 12L22 16L27 15" fill="none" stroke="#c9d6e4" stroke-width="0.9"/></g>
<g transform="translate(681.65,151.30)"><rect x="0.25" y="0.25" width="29.5" height="21.5" fill="#fff" stroke="#e4e4e4" stroke-width="0.5"/><path d="M3 8L8 6L13 9M17 8L21 5L27 7" fill="none" stroke="#f9c9a3" stroke-width="0.9"/><path d="M3 10L8 9L13 11M17 11L21 9L27 10" fill="none" stroke="#fce6d3" stroke-width="0.9"/><path d="M3 16L8 14L13 14M17 15L21 13L27 14" fill="none" stroke="#c9d6e4" stroke-width="0.9"/><path d="M15 1V21" stroke="#eee" stroke-width="0.4"/></g>
<g transform="translate(713.20,151.30)"><rect x="0.25" y="0.25" width="29.5" height="21.5" fill="#fff" stroke="#e4e4e4" stroke-width="0.5"/><path d="M4 6L9 3L14 6L18 5L24 8" fill="none" stroke="#f9c9a3" stroke-width="0.9"/><path d="M4 11L9 9L14 13L18 11L24 14" fill="none" stroke="#c9d6e4" stroke-width="0.9"/></g>
<g transform="translate(650.10,175.35)"><rect x="0.25" y="0.25" width="29.5" height="21.5" fill="#fff" stroke="#e4e4e4" stroke-width="0.5"/><path d="M2 8L8 3L18 11L28 6V20H2Z" fill="#c9d6e4"/><path d="M2 12L8 10L18 15L28 11V20H2Z" fill="#f9c9a3" opacity="0.7"/><path d="M2 16L8 15L18 18L28 16V20H2Z" fill="#fce6d3"/></g>
<g transform="translate(681.65,175.35)"><rect x="0.25" y="0.25" width="29.5" height="21.5" fill="#fff" stroke="#e4e4e4" stroke-width="0.5"/><path d="M2 6L6 13L10 4L13 12V20H2Z M16 6L20 13L24 4L28 12V20H16Z" fill="#c9d6e4"/><path d="M2 12L6 15L10 10L13 15V20H2Z M16 12L20 15L24 10L28 15V20H16Z" fill="#f9c9a3" opacity="0.7"/><path d="M2 16L6 17L10 15L13 17V20H2Z M16 16L20 17L24 15L28 17V20H16Z" fill="#fce6d3"/></g>
<g transform="translate(713.20,175.35)"><rect x="0.25" y="0.25" width="29.5" height="21.5" fill="#fff" stroke="#e4e4e4" stroke-width="0.5"/><rect x="5" y="12" width="2.4" height="8" fill="#c9d6e4"/><rect x="9" y="9" width="2.4" height="11" fill="#c9d6e4"/><rect x="13" y="14" width="2.4" height="6" fill="#c9d6e4"/><rect x="17" y="4" width="2.4" height="16" fill="#c9d6e4"/><rect x="21" y="11" width="2.4" height="9" fill="#c9d6e4"/><path d="M5 9L10 5L15 10L19 7L23 10" fill="none" stroke="#f9c9a3" stroke-width="0.8"/></g>
<g transform="translate(650.10,199.40)"><rect x="0.25" y="0.25" width="29.5" height="21.5" fill="#fff" stroke="#e4e4e4" stroke-width="0.5"/><circle cx="4" cy="17" r="1.8" fill="none" stroke="#f9c9a3" stroke-width="0.7"/><circle cx="7" cy="11" r="1.8" fill="none" stroke="#f9c9a3" stroke-width="0.7"/><circle cx="10" cy="8" r="1.8" fill="none" stroke="#f9c9a3" stroke-width="0.7"/><circle cx="13" cy="14" r="1.8" fill="none" stroke="#f9c9a3" stroke-width="0.7"/><circle cx="18" cy="7" r="1.8" fill="none" stroke="#f9c9a3" stroke-width="0.7"/><path d="M11 3H15M13 1V5" stroke="#c3e2cf" stroke-width="0.7"/><path d="M15 9H19M17 7V11" stroke="#c3e2cf" stroke-width="0.7"/><path d="M18 16H22M20 14V18" stroke="#c3e2cf" stroke-width="0.7"/><path d="M22 10H26M24 8V12" stroke="#c3e2cf" stroke-width="0.7"/><path d="M6 16H10M8 14V18" stroke="#c3e2cf" stroke-width="0.7"/></g>
<g transform="translate(681.65,199.40)"><rect x="0.25" y="0.25" width="29.5" height="21.5" fill="#fff" stroke="#e4e4e4" stroke-width="0.5"/><rect x="4" y="18" width="1.8" height="2" fill="#c3e2cf"/><rect x="6.5" y="16" width="1.8" height="4" fill="#c3e2cf"/><rect x="9" y="12" width="1.8" height="8" fill="#c3e2cf"/><rect x="11.5" y="7" width="1.8" height="13" fill="#c3e2cf"/><rect x="14" y="3" width="1.8" height="17" fill="#c3e2cf"/><rect x="16.5" y="7" width="1.8" height="13" fill="#c3e2cf"/><rect x="19" y="11" width="1.8" height="9" fill="#c3e2cf"/><rect x="21.5" y="15" width="1.8" height="5" fill="#c3e2cf"/><rect x="24" y="17" width="1.8" height="3" fill="#c3e2cf"/><rect x="26.5" y="18.5" width="1.8" height="1.5" fill="#c3e2cf"/></g>
<g transform="translate(713.20,199.40)"><rect x="0.25" y="0.25" width="29.5" height="21.5" fill="#fff" stroke="#e4e4e4" stroke-width="0.5"/><path d="M5 4V16M3.5 4H6.5M3.5 16H6.5" stroke="#999" stroke-width="0.5"/><rect x="3.5" y="8" width="3" height="4" fill="#c3e2cf"/><path d="M12 3V17M10.5 3H13.5M10.5 17H13.5" stroke="#999" stroke-width="0.5"/><rect x="10.5" y="7" width="3" height="6" fill="#c3e2cf"/><path d="M19 2V18M17.5 2H20.5M17.5 18H20.5" stroke="#999" stroke-width="0.5"/><rect x="17.5" y="6" width="3" height="8" fill="#c3e2cf"/><path d="M26 2V19M24.5 2H27.5M24.5 19H27.5" stroke="#999" stroke-width="0.5"/><rect x="24.5" y="6" width="3" height="9" fill="#c3e2cf"/></g>
<g transform="translate(650.10,223.45)"><rect x="0.25" y="0.25" width="29.5" height="21.5" fill="#fff" stroke="#e4e4e4" stroke-width="0.5"/><rect x="2" y="2" width="3" height="3" fill="#c3e2cf"/><rect x="9" y="2" width="3" height="3" fill="#fce6d3"/><rect x="16" y="2" width="1.5" height="3" fill="#f9c9a3"/><rect x="21" y="2" width="3" height="3" fill="#fce6d3"/><rect x="2" y="9" width="1.5" height="3" fill="#c3e2cf"/><rect x="6" y="9" width="1" height="3" fill="#c3e2cf"/><rect x="10" y="9" width="1.5" height="3" fill="#c3e2cf"/><rect x="14" y="9" width="5" height="3" fill="#ddefe3"/><rect x="23" y="9" width="4" height="3" fill="#f9c9a3"/><rect x="2" y="16" width="1" height="3" fill="#c3e2cf"/><rect x="6" y="16" width="3" height="3" fill="#fce6d3"/><rect x="12" y="16" width="2" height="3" fill="#ddefe3"/><rect x="18" y="16" width="3" height="3" fill="#c3e2cf"/><rect x="24" y="16" width="2" height="3" fill="#fce6d3"/></g>
<g transform="translate(681.65,223.45)"><rect x="0.25" y="0.25" width="29.5" height="21.5" fill="#fff" stroke="#e4e4e4" stroke-width="0.5"/><rect x="2" y="3" width="24" height="2.4" fill="#f2f2f2"/><rect x="2" y="3" width="14" height="2.4" fill="#c3e2cf"/><rect x="17" y="2" width="0.5" height="4.4" fill="#777"/><rect x="2" y="10" width="24" height="2.4" fill="#f2f2f2"/><rect x="2" y="10" width="20" height="2.4" fill="#c3e2cf"/><rect x="21" y="9" width="0.5" height="4.4" fill="#777"/><rect x="2" y="17" width="24" height="2.4" fill="#f2f2f2"/><rect x="2" y="17" width="12" height="2.4" fill="#c3e2cf"/><rect x="25" y="16" width="0.5" height="4.4" fill="#777"/></g>
<g transform="translate(713.20,223.45)"><rect x="0.25" y="0.25" width="29.5" height="21.5" fill="#fff" stroke="#e4e4e4" stroke-width="0.5"/><circle cx="8" cy="14" r="6" fill="#ddefe3"/><circle cx="19" cy="11" r="3.4" fill="#fce6d3"/><circle cx="24" cy="8" r="3.4" fill="#fce6d3"/><circle cx="15" cy="6" r="2.2" fill="#c3e2cf"/><circle cx="8" cy="6" r="1.6" fill="#c3e2cf"/><circle cx="15" cy="17" r="1.8" fill="#c3e2cf"/><circle cx="21.5" cy="15" r="1.6" fill="#f9c9a3"/><circle cx="19" cy="4" r="1.2" fill="#ddefe3"/></g>
</svg>

<div class="a" style="left:0;top:442px;width:750px;height:16px;background:#e5e5e5"></div>
<div class="a" style="left:0;top:458px;width:750px;height:11px;background:#ebebeb;border-top:1px solid #dcdcdc"></div>
<svg class="a" style="left:5.5px;top:446px" width="6" height="8" viewBox="0 0 6 8"><path d="M0.6 1.8V6.2Q3 7.6 5.4 6.2V1.8Q3 0.4 0.6 1.8Q3 3.2 5.4 1.8" fill="none" stroke="#666" stroke-width="0.8"/></svg>
<div class="t" style="left:14px;top:447.5px;font-size:6.3px;color:#666">Data Source</div>
<div class="a" style="left:69.5px;top:442px;width:1px;height:16px;background:#d6d6d6"></div>
<div class="a" style="left:95.5px;top:442px;width:1px;height:16px;background:#d6d6d6"></div>
<div class="a" style="left:187.2px;top:442px;width:1px;height:16px;background:#d6d6d6"></div>
<div class="a" style="left:204px;top:442px;width:1px;height:16px;background:#d6d6d6"></div>
<div class="a" style="left:220.3px;top:442px;width:1px;height:16px;background:#d6d6d6"></div>
<div class="t" style="left:73.2px;top:447.5px;font-size:6.3px;color:#777">Graph</div>
<div class="t" style="left:98.3px;top:447.5px;font-size:6.3px;color:#777">Data</div>
<div class="a" style="left:116.4px;top:442px;width:54.5px;height:16px;background:#fcfcfc"></div>
<svg class="a" style="left:119.8px;top:446.8px" width="6.5" height="6.5" viewBox="0 0 8 8"><rect x="0.5" y="0.5" width="7" height="7" fill="none" stroke="#555" stroke-width="0.8"/><path d="M4 0.5V7.5M0.5 4H7.5" stroke="#555" stroke-width="0.7"/></svg>
<div class="t" style="left:128.9px;top:447.5px;font-size:6.3px;font-weight:bold;color:#333">Dashboard 1</div>
<svg class="a" style="left:174px;top:445px" width="10" height="10" viewBox="0 0 10 10"><rect x="0.5" y="1" width="6.5" height="6" fill="none" stroke="#555" stroke-width="0.8"/><path d="M2 3H5M2 4.8H4" stroke="#555" stroke-width="0.6"/><path d="M6 8H9.5M7.75 6.25V9.75" stroke="#222" stroke-width="1"/></svg>
<svg class="a" style="left:191.5px;top:445px" width="10" height="10" viewBox="0 0 10 10"><rect x="0.5" y="1" width="6.5" height="6" fill="none" stroke="#555" stroke-width="0.8"/><path d="M3.7 1V7M0.5 4H7" stroke="#555" stroke-width="0.6"/><path d="M6 8H9.5M7.75 6.25V9.75" stroke="#222" stroke-width="1"/></svg>
<svg class="a" style="left:208px;top:445px" width="10" height="10" viewBox="0 0 10 10"><path d="M0.5 1.5H3.5V7H0.5Z M3.5 1.5H7V7H3.5" fill="none" stroke="#555" stroke-width="0.8"/><path d="M6 8H9.5M7.75 6.25V9.75" stroke="#222" stroke-width="1"/></svg>
<div class="a" style="left:559.7px;top:458px;width:1px;height:11px;background:#d8d8d8"></div>
<div class="a" style="left:679px;top:458px;width:1px;height:11px;background:#d8d8d8"></div>
<div class="a" style="left:626.4px;top:458px;width:1px;height:11px;background:#d8d8d8"></div>
<div class="a" style="left:640.3px;top:458px;width:1px;height:11px;background:#d8d8d8"></div>
<div class="a" style="left:654.5px;top:458px;width:1px;height:11px;background:#d8d8d8"></div>
<svg class="a" style="left:680px;top:458px" width="70" height="11" viewBox="680 458 70 11">
<path d="M683.5 461.5V465.5" stroke="#b5b5b5" stroke-width="0.8"/><path d="M687 461.5L684.5 463.5L687 465.5Z" fill="#b5b5b5"/>
<path d="M695 461.5L692.5 463.5L695 465.5Z" fill="#b5b5b5"/>
<path d="M701 461.5L703.5 463.5L701 465.5Z" fill="#b5b5b5"/>
<path d="M709 461.5L711.5 463.5L709 465.5Z" fill="#b5b5b5"/><path d="M712.3 461.5V465.5" stroke="#b5b5b5" stroke-width="0.8"/>
<rect x="721.3" y="460.3" width="1.4" height="1.4" fill="#b0b0b0"/>
<rect x="721.3" y="462.3" width="1.4" height="1.4" fill="#b0b0b0"/>
<rect x="721.3" y="464.3" width="1.4" height="1.4" fill="#b0b0b0"/>
<rect x="723.3" y="460.3" width="1.4" height="1.4" fill="#b0b0b0"/>
<rect x="723.3" y="462.3" width="1.4" height="1.4" fill="#b0b0b0"/>
<rect x="723.3" y="464.3" width="1.4" height="1.4" fill="#b0b0b0"/>
<rect x="725.3" y="460.3" width="1.4" height="1.4" fill="#b0b0b0"/>
<rect x="725.3" y="462.3" width="1.4" height="1.4" fill="#b0b0b0"/>
<rect x="725.3" y="464.3" width="1.4" height="1.4" fill="#b0b0b0"/>
<rect x="732" y="460.3" width="6" height="2.2" fill="#b0b0b0"/>
<rect x="732" y="463.3" width="1.4" height="1.4" fill="#b0b0b0"/>
<rect x="732" y="465.3" width="1.4" height="1.4" fill="#b0b0b0"/>
<rect x="734" y="463.3" width="1.4" height="1.4" fill="#b0b0b0"/>
<rect x="734" y="465.3" width="1.4" height="1.4" fill="#b0b0b0"/>
<rect x="736" y="463.3" width="1.4" height="1.4" fill="#b0b0b0"/>
<rect x="736" y="465.3" width="1.4" height="1.4" fill="#b0b0b0"/>
<rect x="743.5" y="460.3" width="6" height="6" fill="#555"/>
</svg>

</body></html>
